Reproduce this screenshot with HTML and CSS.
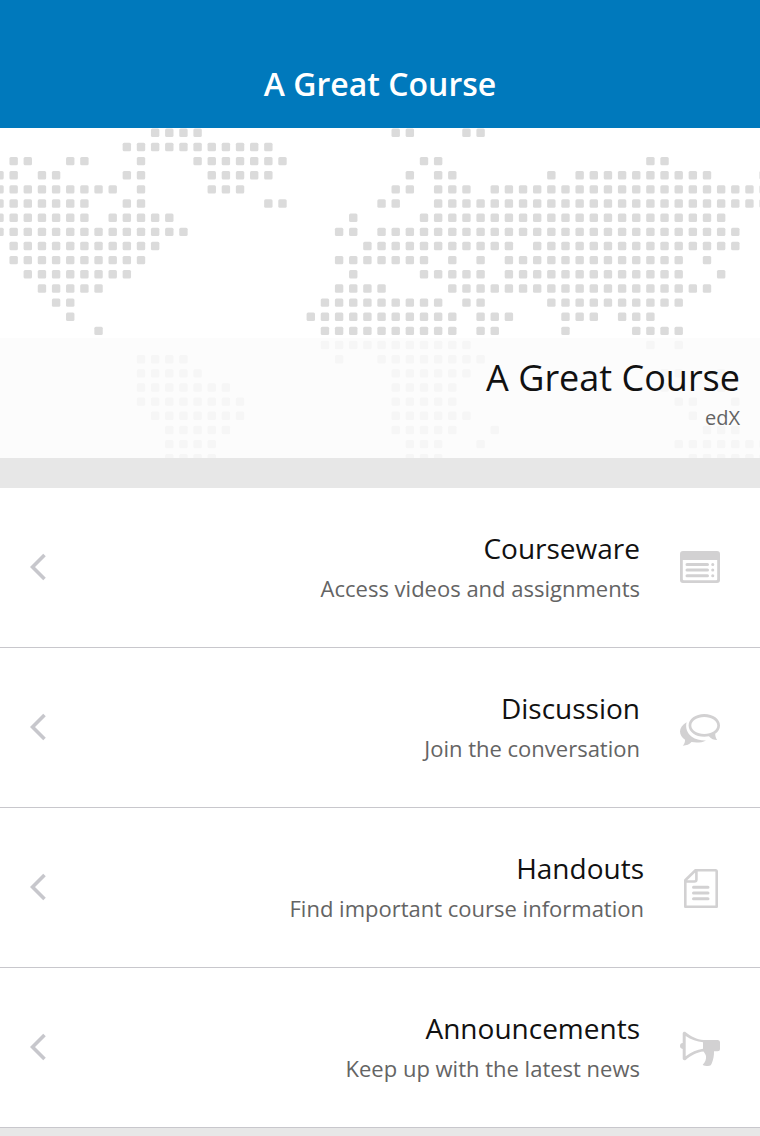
FILE: index.html
```html
<!DOCTYPE html>
<html lang="en">
<head>
<meta charset="utf-8">
<meta name="viewport" content="width=device-width, initial-scale=1">
<title>A Great Course</title>
<link rel="stylesheet" href="styles.css">
</head>
<body>
<header class="topbar">
  <h1 class="topbar-title">A Great Course</h1>
</header>
<main>
  <section class="banner">
    <svg class="banner-map" viewBox="0 0 760 330" preserveAspectRatio="xMidYMid slice" aria-hidden="true"></svg>
    <div class="banner-caption">
      <h2 class="banner-title">A Great Course</h2>
      <p class="banner-org">edX</p>
    </div>
  </section>
  <nav class="menu">
    <a class="row" href="#courseware">
      <svg class="chevron" viewBox="0 0 16 29" aria-hidden="true"><path d="M14.500 2 2.500 14l12 12"/></svg>
      <span class="row-text">
        <span class="row-title">Courseware</span>
        <span class="row-sub">Access videos and assignments</span>
      </span>
      <svg class="icon" viewBox="0 0 40 41" aria-hidden="true">
        <path fill-rule="evenodd" d="M3 4h34a3 3 0 0 1 3 3v26a3 3 0 0 1-3 3H3a3 3 0 0 1-3-3V7a3 3 0 0 1 3-3zM2.800 13v19.200a1 1 0 0 0 1 1h32.400a1 1 0 0 0 1-1V13z"/>
        <path class="stroke" d="M7 17.400h20.500M7 23h20.500M7 28.700h20.500M32.700 17.400h.1M32.700 23h.1M32.700 28.700h.1"/>
      </svg>
    </a>
    <a class="row" href="#discussion">
      <svg class="chevron" viewBox="0 0 16 29" aria-hidden="true"><path d="M14.500 2 2.500 14l12 12"/></svg>
      <span class="row-text">
        <span class="row-title">Discussion</span>
        <span class="row-sub">Join the conversation</span>
      </span>
      <svg class="icon" viewBox="0 0 40 41" aria-hidden="true">
        <path fill-rule="evenodd" d="M24.300 7C33.100 7 40 12 40 18.400c0 3.400-1.900 6.300-4.800 8.300.1 2.800.8 4.500 2 6.300-3.200 0-6-1-8.300-3.800-1.500.3-3 .5-4.600.5-8.800 0-15.700-5-15.700-11.300S15.500 7 24.300 7zM24.300 9.900c-7.300 0-13 3.800-13 8.500s5.700 8.500 13 8.500 13-3.800 13-8.500-5.700-8.500-13-8.500z"/>
        <path d="M6.600 15.200C2.400 17.500 0 20.800 0 24.600c0 3.200 1.900 6 5 8.100.1 2-.4 4-2.200 6 3.800-.1 6.800-1.300 8.700-3.600 5.200 1 10.300.5 14.500-1.700-5.200.2-10.200-.8-14.200-3.700C7 26 5.200 20.600 6.600 15.200z"/>
      </svg>
    </a>
    <a class="row" href="#handouts">
      <svg class="chevron" viewBox="0 0 16 29" aria-hidden="true"><path d="M14.500 2 2.500 14l12 12"/></svg>
      <span class="row-text">
        <span class="row-title">Handouts</span>
        <span class="row-sub">Find important course information</span>
      </span>
      <svg class="icon icon-narrow" viewBox="0 0 36 41" aria-hidden="true">
        <path class="page" d="M11.500 3.200H31.500a1.200 1.200 0 0 1 1.200 1.200V39.700H1.300V13.200zM12.400 3.500V12.500a2 2 0 0 1-2 2H1.500"/>
        <path class="stroke" d="M9.500 20.300h14.500M9.500 26h14.500M9.500 31.700h14.500"/>
      </svg>
    </a>
    <a class="row" href="#announcements">
      <svg class="chevron" viewBox="0 0 16 29" aria-hidden="true"><path d="M14.500 2 2.500 14l12 12"/></svg>
      <span class="row-text">
        <span class="row-title">Announcements</span>
        <span class="row-sub">Keep up with the latest news</span>
      </span>
      <svg class="icon" viewBox="0 0 40 41" aria-hidden="true">
        <path fill-rule="evenodd" d="M2.700 6.400C2.700 5 4.500 4.200 5.700 5.200 11 9.300 17 12.500 23.500 13H37.500a2.500 2.500 0 0 1 2.500 2.500v6.300a2.500 2.500 0 0 1-2.500 2.500H34c.2 4.500-.8 8.700-2.300 12.300-.8 2-1.700 2.400-3.700 2.400-2.200 0-4-.3-5.300-1.300 2.600-2.500 3.600-5.500 3.300-8.200-.1-1.500-.9-3-2.500-5C17 25 11 28.500 5.700 32.900c-1.200.9-3 .2-3-1.300V21.900A3 3 0 0 1 0 19a3 3 0 0 1 2.700-2.900zM5.700 9v20.300C11 25.200 17 22.500 23 21.800V15.300C17 14.800 11 12.500 5.700 9z"/>
      </svg>
    </a>
  </nav>
</main>
<script src="map.js"></script>
</body>
</html>
```
FILE: styles.css
```css
* {
  box-sizing: border-box;
}

body {
  margin: 0;
  min-height: 100vh;
  background: #e7e7e7;
  color: #111;
  font-family: "Open Sans", "Noto Sans", sans-serif;
}

h1,
h2,
p {
  margin: 0;
  font-weight: 400;
}

.topbar {
  padding: 62px 20px 22px;
  background: #0079bc;
  color: #fff;
  text-align: center;
}

.topbar-title {
  font-size: 32px;
  line-height: 44px;
  font-weight: 600;
}

.banner {
  position: relative;
  display: flex;
  flex-direction: column;
  justify-content: flex-end;
  min-height: 330px;
  background: #fff;
}

.banner-map {
  position: absolute;
  inset: 0;
  width: 100%;
  height: 100%;
  fill: #dbdbdb;
}

.banner-caption {
  position: relative;
  padding: 16px 20px 26px;
  background: rgba(251, 251, 251, 0.82);
  text-align: right;
}

.banner-title {
  font-size: 36px;
  line-height: 48px;
}

.banner-org {
  margin-top: 2px;
  color: #646464;
  font-size: 20px;
  line-height: 28px;
}

.menu {
  margin-top: 30px;
}

.row {
  display: flex;
  align-items: center;
  min-height: 160px;
  padding: 0 40px 0 30px;
  border-bottom: 1px solid #c8c7cc;
  background: #fff;
  color: inherit;
  text-decoration: none;
}

.row-text {
  display: flex;
  flex: 1;
  flex-direction: column;
  gap: 5px;
  padding-bottom: 4px;
  text-align: right;
}

.row-title {
  font-size: 28px;
  line-height: 40px;
}

.row-sub {
  color: #646464;
  font-size: 22px;
  line-height: 30px;
}

.chevron {
  flex: none;
  width: 16px;
  height: 29px;
  fill: none;
  stroke: #c7c7cc;
  stroke-width: 3.6;
}

.icon {
  flex: none;
  width: 40px;
  height: 41px;
  margin-left: 40px;
  fill: #d2d1d2;
}

.icon-narrow {
  width: 36px;
}

.stroke,
.page {
  fill: none;
  stroke: #d2d1d2;
}

.stroke {
  stroke-width: 3;
  stroke-linecap: round;
}

.page {
  stroke-width: 2.6;
  stroke-linejoin: round;
}
```
FILE: map.js
```js
// Each entry lists the filled columns of one row of the dotted world map.
const rows = [
  "11-14 28-29 33-34",
  "9-19",
  "1-2 5-6 10 14-20 30-31 46-47",
  "0-1 3-4 9-10 15-19 29 31-32 39 41-50 54",
  "0-8 10 15-17 28-29 31-33 35-54",
  "0-6 9-10 19-20 27-28 31-54",
  "0-6 8-12 25 30-51",
  "0-13 24-25 27-52",
  "1-11 26-36 38-52",
  "1-10 24-30 32 34 36-48 50",
  "2-9 25 30-34 36-48 51",
  "3-7 24-27 32-50",
  "4-5 23-31 33-34 39-48",
  "5 22-32 34-36 40-42 44-46",
  "7 23-32 34-35 40 45-48",
  "23-33 46 48",
  "10-13 24 27-34",
  "10-14 28-33 47-48 51",
  "10-16 28-32 47 51",
  "10-17 28-32 48-49 52",
  "11-17 28-33 49",
  "12-16 28-32 35 50-52",
  "12-15 29-31 34 48-54",
  "12-15 29-31 49-54"
];

const pitch = 14.15;
const size = 8.4;
const map = document.querySelector(".banner-map");

rows.forEach((runs, r) => {
  for (const run of runs.split(" ")) {
    const [from, to = from] = run.split("-").map(Number);
    for (let c = from; c <= to; c++) {
      const dot = document.createElementNS("http://www.w3.org/2000/svg", "rect");
      dot.setAttribute("x", (c * pitch - 0.5 - size / 2).toFixed(2));
      dot.setAttribute("y", (r * pitch + 4.8 - size / 2).toFixed(2));
      dot.setAttribute("width", size);
      dot.setAttribute("height", size);
      dot.setAttribute("rx", 1.5);
      map.appendChild(dot);
    }
  }
});
```
